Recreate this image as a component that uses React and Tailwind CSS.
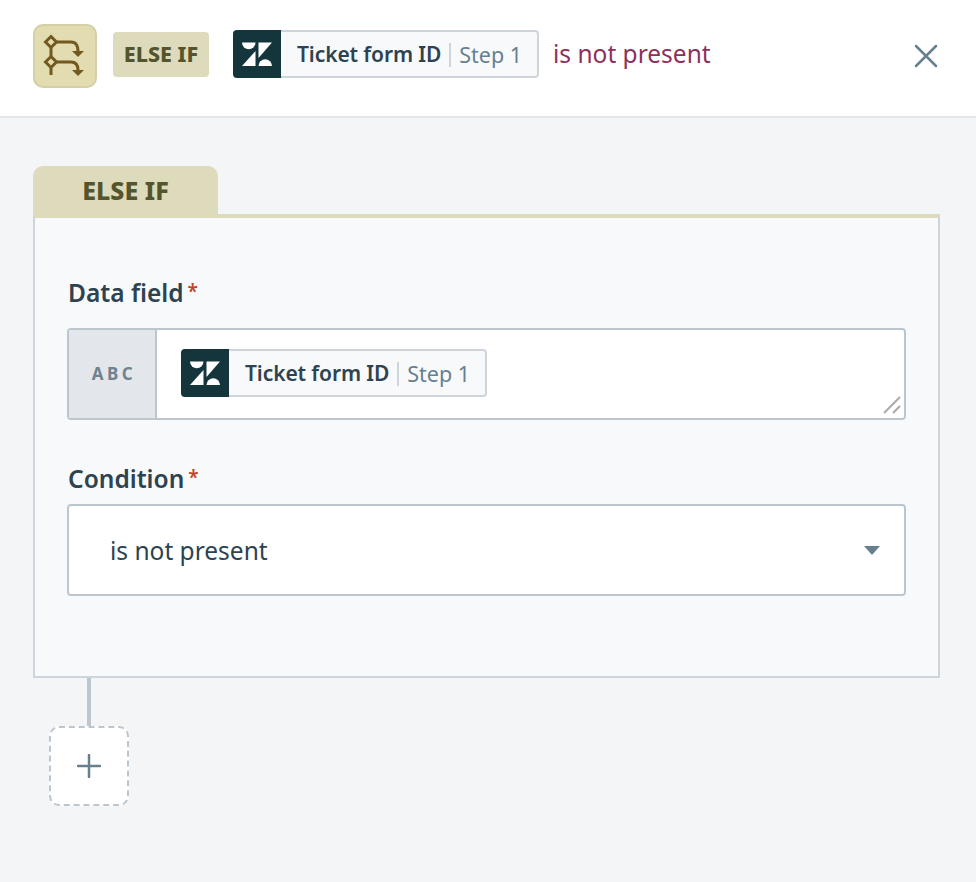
const font = "font-['Noto_Sans','Open_Sans',sans-serif]";

const ZendeskLogo = ({ className }) => (
  <svg viewBox="0 0 48 48" className={className} fill="#fff">
    <path d="M9 12.500h13.500a6.750 6.750 0 0 1-13.500 0z" />
    <path d="M22.500 21v15H9z" />
    <path d="M25.500 12.500H39L25.500 28z" />
    <path d="M25.500 36a6.750 6.750 0 0 1 13.500 0z" />
  </svg>
);

const DataPill = () => (
  <div className="flex h-12 w-[306px] items-stretch">
    <div className="flex w-12 shrink-0 items-center justify-center rounded-l-[4px] bg-[#15353d]">
      <ZendeskLogo className="h-12 w-12" />
    </div>
    <div className="flex flex-1 items-center rounded-r-[4px] border-2 border-l-0 border-[#cdd4dc] bg-[#f8f9fb] pl-4 pt-0.5">
      <span className="text-[21px] font-semibold tracking-[-0.1px] text-[#2d4350]">Ticket form ID</span>
      <span className="mx-2 h-6 w-0.5 bg-[#cdd4dc]" />
      <span className="text-[21.5px] text-[#67808f]">Step 1</span>
    </div>
  </div>
);

const RequiredLabel = ({ children }) => (
  <div className="flex h-9 items-center gap-1 pt-0.5 text-[24.5px] font-semibold text-[#2d4350]">
    {children}
    <span className="-mt-1 text-[19px] text-[#c0432a]">*</span>
  </div>
);

export default function App() {
  return (
    <div className={`${font} h-[882px] w-[976px] overflow-hidden bg-[#f4f5f7]`}>
      {/* top bar */}
      <div className="flex h-[118px] items-center border-b-2 border-[#e3e6ea] bg-white pl-[33px] pr-[38px]">
        <div className="mt-[-4px] flex h-16 w-16 items-center justify-center rounded-[10px] border-2 border-[#d5cfa5] bg-[#e2dcb0]">
          <svg viewBox="0 0 64 64" className="h-16 w-16 shrink-0" fill="none" stroke="#72591f" strokeWidth="3">
            <path d="M18 24v8M18 44v7" />
            <path d="M24 18h14c5 0 7 3 7 10" />
            <path d="M24 38h14c5 0 7 3 7 8" />
            <path d="M18 12.500l5.500 5.500-5.500 5.500-5.500-5.500z" />
            <path d="M18 32.500l5.500 5.500-5.500 5.500-5.500-5.500z" />
            <path d="M39 27h12l-6 6z" fill="#72591f" stroke="none" />
            <path d="M39 46h12l-6 6z" fill="#72591f" stroke="none" />
          </svg>
        </div>
        <div className="ml-4 mt-[-8px] flex h-[45px] w-24 items-center justify-center rounded-[4px] bg-[#dddbbb] text-[21.5px] font-extrabold text-[#55552d]">
          ELSE IF
        </div>
        <div className="ml-6 mt-[-8px]">
          <DataPill />
        </div>
        <span className="ml-3.5 mt-[-8px] text-[24.5px] text-[#8d315c]">is not present</span>
        <svg viewBox="0 0 24 24" className="ml-auto mt-[-4px] h-6 w-6 shrink-0" stroke="#67808f" strokeWidth="2.500" strokeLinecap="round">
          <path d="M2 2l20 20M22 2L2 22" />
        </svg>
      </div>

      <div className="pl-[33px] pt-12">
        {/* tab */}
        <div className="flex h-[50px] w-[185px] items-center justify-center rounded-t-[10px] bg-[#dddbbb] text-[25px] font-extrabold text-[#55552d]">
          ELSE IF
        </div>

        {/* card */}
        <div className="-mt-0.5 h-[464px] w-[907px] border-2 border-t-4 border-[#cdd4dc] border-t-[#dddbbb] bg-[#f8f9fb] px-8 pt-[56px]">
          <div className="pl-px">
            <RequiredLabel>Data field</RequiredLabel>
          </div>
          <div className="mt-[18px] flex h-[92px] rounded-[4px] border-2 border-[#bcc6cf] bg-white">
            <div className="flex w-[88px] shrink-0 items-center justify-center border-r-2 border-[#bcc6cf] bg-[#e3e6ea] pl-1 text-[17px] font-bold tracking-[3.500px] text-[#6f8290]">
              ABC
            </div>
            <div className="relative flex flex-1 items-center pb-0.5 pl-6">
              <DataPill />
              <svg viewBox="0 0 18 18" className="absolute bottom-1 right-[3px] h-[18px] w-[18px]" stroke="#aaa" strokeWidth="2">
                <path d="M1 17L17 1M10 17l7-7" />
              </svg>
            </div>
          </div>

          <div className="mt-10 pl-px">
            <RequiredLabel>Condition</RequiredLabel>
          </div>
          <div className="mt-2 flex h-[92px] items-center rounded-[4px] border-2 border-[#bcc6cf] bg-white pl-[41px] pr-6 pt-0.5 text-[24.5px] text-[#2d4350]">
            is not present
            <svg viewBox="0 0 16 10" className="ml-auto h-2.5 w-4" fill="#67808f">
              <path d="M0 0h16L8 9z" />
            </svg>
          </div>
        </div>

        {/* connector and add button */}
        <div className="ml-[54px] h-12 w-1 bg-[#bcc6cf]" />
        <div className="ml-4 flex h-20 w-20 items-center justify-center rounded-[10px] border-2 border-dashed border-[#bcc6cf] bg-white">
          <svg viewBox="0 0 24 24" className="h-6 w-6" stroke="#67808f" strokeWidth="2.500" strokeLinecap="round">
            <path d="M12 1v22M1 12h22" />
          </svg>
        </div>
      </div>
    </div>
  );
}
